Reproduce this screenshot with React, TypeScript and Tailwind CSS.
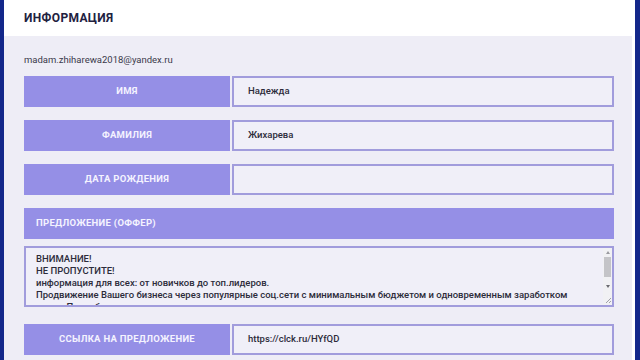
const FONT = "font-['Roboto','Liberation_Sans',sans-serif]";

const OFFER_LINES = [
  "ВНИМАНИЕ!",
  "НЕ ПРОПУСТИТЕ!",
  "информация для всех: от новичков до топ.лидеров.",
  "Продвижение Вашего бизнеса через популярные соц.сети с минимальным бюджетом и одновременным заработком",
  "денег. Подробности по ссылке ниже.",
];

function FieldRow({ label, value, className = "" }: { label: string; value: string; className?: string }) {
  return (
    <div className={`flex h-[31px] gap-[2px] ${className}`}>
      {/* Label */}
      <div className="flex w-[206px] shrink-0 items-center justify-center bg-[#958fe6] text-[9.5px] font-bold uppercase tracking-[0.03em] text-[#f4f3ff]">
        {label}
      </div>
      {/* Value */}
      <div className="flex flex-1 items-center border-2 border-[#a19cdc] bg-[#f0eff8] px-[14px] text-[9.5px] font-medium text-[#2c2b3a]">
        {value}
      </div>
    </div>
  );
}

export default function App() {
  return (
    <div className={`flex h-[360px] w-[640px] overflow-hidden bg-[#13278a] ${FONT}`}>
      <div className="ml-[4px] mr-[5px] flex flex-1 flex-col bg-white">
        {/* Header */}
        <div className="flex h-[36px] shrink-0 items-center px-[20px]">
          <h1 className="text-[12px] font-bold tracking-[0.03em] text-[#22213f]">ИНФОРМАЦИЯ</h1>
        </div>

        {/* Body */}
        <div className="mr-[3px] flex flex-1 flex-col bg-[#eeedf6] pl-[20px] pr-[18px] pt-[17px]">
          <p className="h-[14px] text-[9.5px] leading-[14px] text-[#3a394a]">madam.zhiharewa2018@yandex.ru</p>

          <FieldRow label="Имя" value="Надежда" className="mt-[9px]" />
          <FieldRow label="Фамилия" value="Жихарева" className="mt-[13px]" />
          <FieldRow label="Дата рождения" value="" className="mt-[13px]" />

          {/* Offer */}
          <div className="mt-[13px] flex h-[31px] items-center bg-[#958fe6] px-[12px] text-[9.5px] font-bold uppercase tracking-[0.03em] text-[#f4f3ff]">
            Предложение (оффер)
          </div>
          <div className="mt-[7px] flex h-[61px] border-2 border-[#a19cdc] bg-[#f0eff8]">
            <div className="flex-1 overflow-hidden px-[10px] pt-[5px] text-[9.5px] font-medium leading-[12px] text-[#2c2b3a]">
              {OFFER_LINES.map((line) => (
                <div key={line} className="whitespace-nowrap">{line}</div>
              ))}
            </div>
            {/* Scrollbar */}
            <div className="flex w-[9px] shrink-0 flex-col items-center bg-[#f1f1f4]">
              <span className="mt-[3px] h-0 w-0 border-x-[2.5px] border-b-[3px] border-x-transparent border-b-[#9a9aa0]" />
              <span className="mt-[3px] h-[20px] w-[7px] bg-[#c4c4c8]" />
              <span className="mt-[8px] h-0 w-0 border-x-[2.5px] border-t-[3px] border-x-transparent border-t-[#6a6a70]" />
              <svg className="mt-auto mb-[1px]" width="8" height="8" viewBox="0 0 8 8">
                <path d="M7 2 L2 7 M7 5 L5 7" stroke="#a0a0a8" strokeWidth="1" />
              </svg>
            </div>
          </div>

          <FieldRow label="Ссылка на предложение" value="https://clck.ru/HYfQD" className="mt-[17px]" />
        </div>
      </div>
    </div>
  );
}
